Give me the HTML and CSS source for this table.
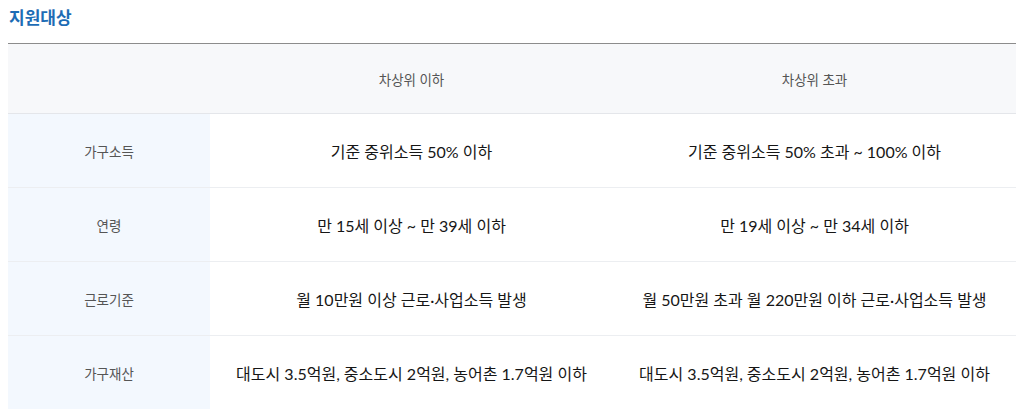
FILE: index.html
```html
<!DOCTYPE html>
<html lang="ko">
<head>
<meta charset="utf-8">
<link rel="stylesheet" href="styles.css">
</head>
<body>
<section class="support">
  <h2 class="title">지원대상</h2>
  <table class="tbl">
    <colgroup>
      <col class="c-label">
      <col class="c-val">
      <col class="c-val">
    </colgroup>
    <thead>
      <tr>
        <th class="corner"></th>
        <th>차상위 이하</th>
        <th>차상위 초과</th>
      </tr>
    </thead>
    <tbody>
      <tr>
        <th class="label">가구소득</th>
        <td>기준 중위소득 50% 이하</td>
        <td>기준 중위소득 50% 초과 ~ 100% 이하</td>
      </tr>
      <tr>
        <th class="label">연령</th>
        <td>만 15세 이상 ~ 만 39세 이하</td>
        <td>만 19세 이상 ~ 만 34세 이하</td>
      </tr>
      <tr>
        <th class="label">근로기준</th>
        <td>월 10만원 이상 근로·사업소득 발생</td>
        <td>월 50만원 초과 월 220만원 이하 근로·사업소득 발생</td>
      </tr>
      <tr>
        <th class="label">가구재산</th>
        <td>대도시 3.5억원, 중소도시 2억원, 농어촌 1.7억원 이하</td>
        <td>대도시 3.5억원, 중소도시 2억원, 농어촌 1.7억원 이하</td>
      </tr>
    </tbody>
  </table>
</section>
</body>
</html>
```

FILE: styles.css
```css
html, body {
  margin: 0;
  padding: 0;
  background: #ffffff;
}
body {
  padding: 0 15px 0 8px;
  font-family: Lato, "Noto Sans CJK KR", sans-serif;
  color: #222222;
}
.title {
  margin: 0;
  padding: 7px 0 0 1px;
  height: 36px;
  font-size: 17px;
  font-weight: 700;
  color: #1d6cb5;
  line-height: 22px;
}
.tbl {
  width: 100%;
  border-collapse: collapse;
  table-layout: fixed;
  border-top: 1px solid #8c8c8c;
}
.c-label { width: 202px; }
.tbl thead th {
  height: 69px;
  padding: 0;
  background: #f7f8fa;
  font-size: 13.5px;
  font-weight: 400;
  color: #555555;
  text-align: center;
  vertical-align: middle;
  border-bottom: 1px solid #e4e6ea;
}
.tbl tbody th,
.tbl tbody td {
  height: 73px;
  padding: 0;
  text-align: center;
  vertical-align: middle;
  border-bottom: 1px solid #eceef1;
}
.tbl tbody th.label {
  background: #f3f8fe;
  font-size: 13.5px;
  font-weight: 400;
  color: #555555;
}
.tbl tbody td {
  font-size: 16px;
  color: #161616;
  background: #ffffff;
}
```
